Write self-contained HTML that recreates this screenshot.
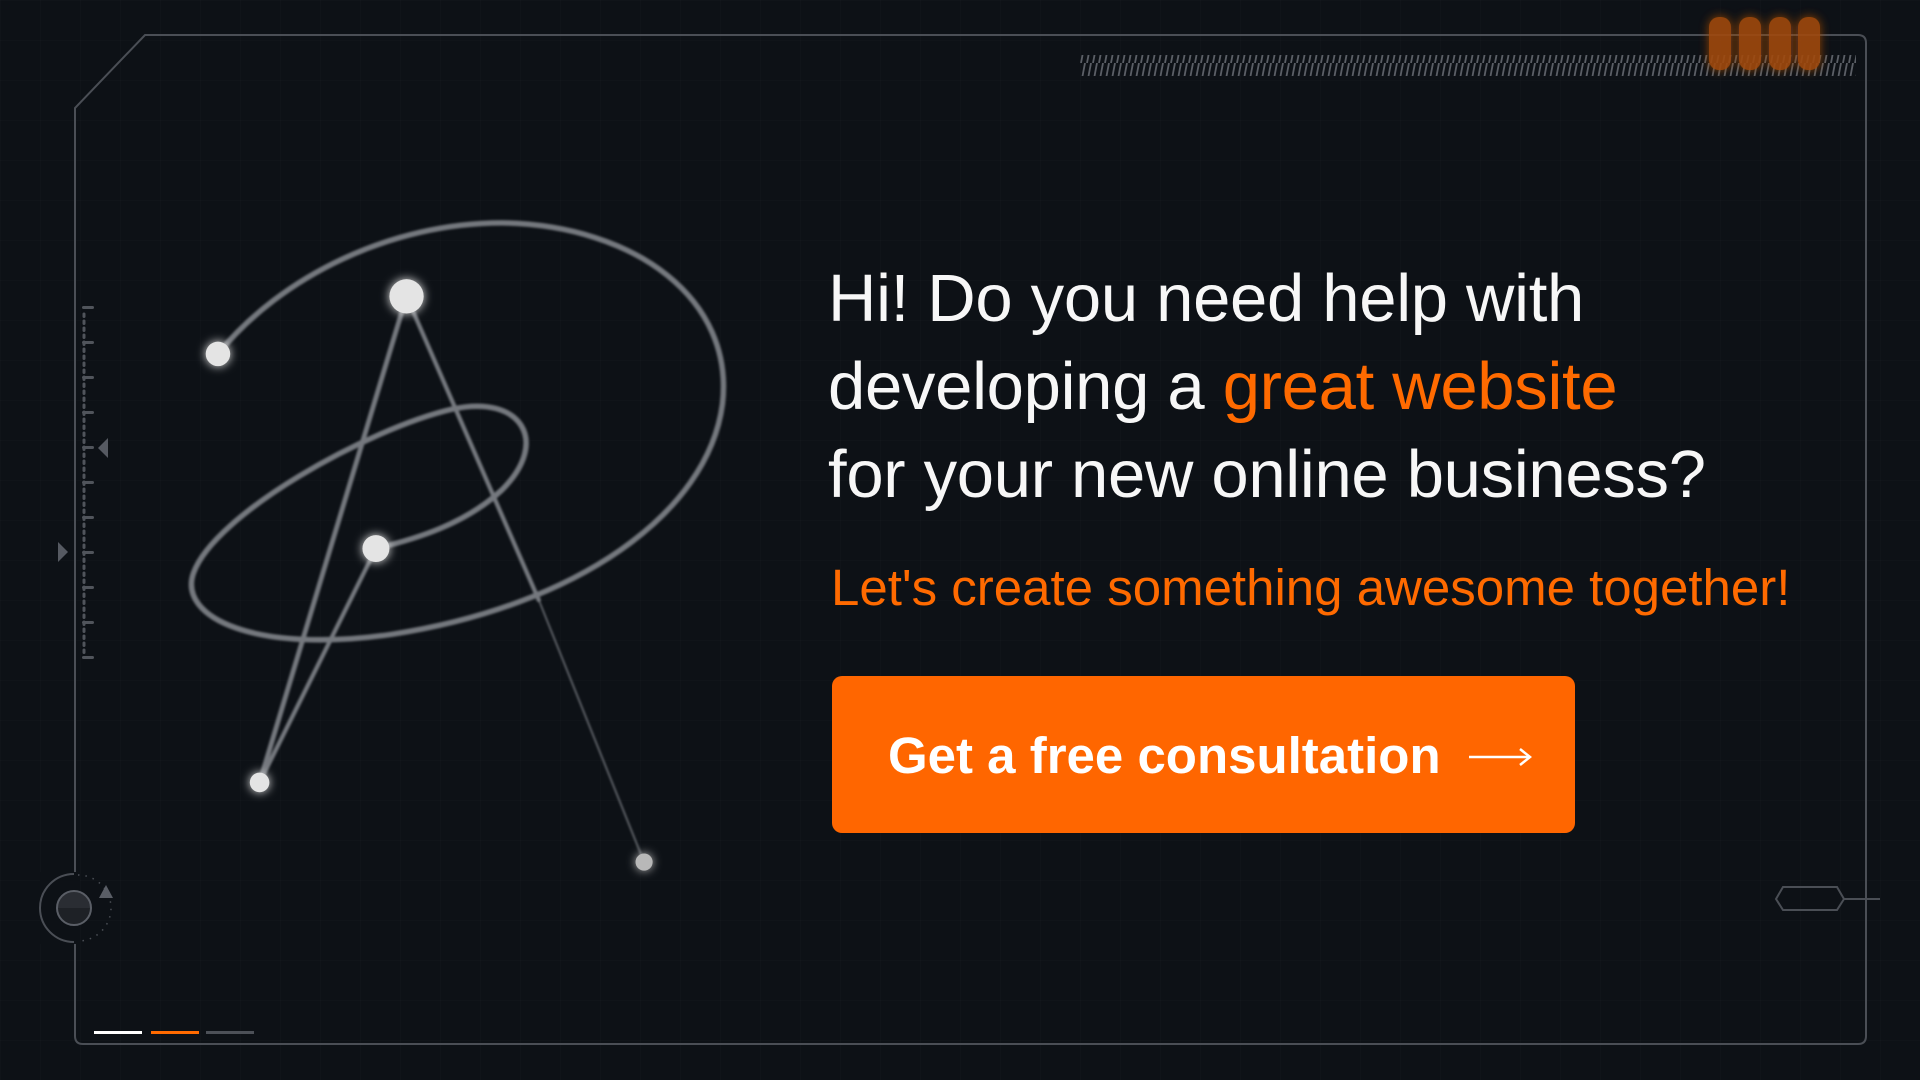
<!DOCTYPE html>
<html><head><meta charset="utf-8"><style>
html,body{margin:0;padding:0;}
body{width:1920px;height:1080px;overflow:hidden;background:#0d1116;position:relative;font-family:"Liberation Sans",sans-serif;
background-image:linear-gradient(rgba(255,255,255,0.012) 1px,transparent 1px),linear-gradient(90deg,rgba(255,255,255,0.012) 1px,transparent 1px);background-size:40px 40px;}
.t{position:absolute;white-space:nowrap;}
.h{left:828px;font-size:67px;color:#f7f7f7;letter-spacing:-0.3px;line-height:1;}
.o{color:#ff6a00;}
</style></head><body>
<svg width="1920" height="1080" style="position:absolute;left:0;top:0" xmlns="http://www.w3.org/2000/svg">
<defs>
<pattern id="hatch" width="6" height="21" patternUnits="userSpaceOnUse">
<line x1="5" y1="0" x2="1" y2="21" stroke="#5b5f66" stroke-width="1.8"/>
</pattern>
<filter id="glow" x="-100%" y="-100%" width="300%" height="300%"><feGaussianBlur stdDeviation="4" result="b"/><feMerge><feMergeNode in="b"/><feMergeNode in="SourceGraphic"/></feMerge></filter>
<filter id="og" x="-100%" y="-50%" width="300%" height="200%"><feGaussianBlur stdDeviation="5" result="b"/><feMerge><feMergeNode in="b"/><feMergeNode in="SourceGraphic"/></feMerge></filter>
<filter id="soft"><feGaussianBlur stdDeviation="0.8"/></filter>
</defs>
<path d="M145 35 H1858 Q1866 35 1866 43 V1036 Q1866 1044 1858 1044 H83 Q75 1044 75 1036 V108 Z" fill="none" stroke="#4a4e55" stroke-width="2"/>
<rect x="1080" y="55" width="776" height="21" fill="url(#hatch)"/>
<g fill="#a04a08" opacity="0.9" filter="url(#og)">
<rect x="1709" y="17" width="22" height="53" rx="10"/>
<rect x="1739" y="17" width="22" height="53" rx="10"/>
<rect x="1769" y="17" width="22" height="53" rx="10"/>
<rect x="1798" y="17" width="22" height="53" rx="10"/>
</g>
<g fill="#50545b">
<rect x="82" y="306" width="12" height="3" rx="1.5"/><rect x="82" y="341" width="12" height="3" rx="1.5"/><rect x="82" y="376" width="12" height="3" rx="1.5"/><rect x="82" y="411" width="12" height="3" rx="1.5"/><rect x="82" y="446" width="12" height="3" rx="1.5"/><rect x="82" y="481" width="12" height="3" rx="1.5"/><rect x="82" y="516" width="12" height="3" rx="1.5"/><rect x="82" y="551" width="12" height="3" rx="1.5"/><rect x="82" y="586" width="12" height="3" rx="1.5"/><rect x="82" y="621" width="12" height="3" rx="1.5"/><rect x="82" y="656" width="12" height="3" rx="1.5"/>
</g>
<line x1="84" y1="314" x2="84" y2="654" stroke="#50545b" stroke-width="3" stroke-dasharray="2.5 4.5" stroke-linecap="round"/>
<polygon points="98,448 108,438 108,458" fill="#565a62"/>
<polygon points="68,552 58,542 58,562" fill="#565a62"/>
<rect x="40" y="872" width="40" height="72" fill="#0d1116"/>
<path d="M74 874 A34 34 0 0 0 74 942" fill="none" stroke="#4a4e55" stroke-width="2"/>
<path d="M78 875 A33 33 0 0 1 78 941" fill="none" stroke="#4a4e55" stroke-width="1.5" stroke-dasharray="1.5 6"/>
<circle cx="74" cy="908" r="17" fill="#1e2126"/>
<path d="M57 908 A17 17 0 0 1 91 908 Z" fill="#2a2d33"/>
<circle cx="74" cy="908" r="17" fill="none" stroke="#5a5e66" stroke-width="2"/>
<polygon points="106,885 113,898 99,898" fill="#5a5e66"/>
<polygon points="1776,899 1783,887 1837,887 1844,899 1837,910 1783,910" fill="none" stroke="#4a4e55" stroke-width="2"/>
<line x1="1844" y1="899" x2="1880" y2="899" stroke="#4a4e55" stroke-width="2"/>
<rect x="94" y="1031" width="48" height="3" fill="#ffffff"/>
<rect x="151" y="1031" width="48" height="3" fill="#ff6a00"/>
<rect x="206" y="1031" width="48" height="3" fill="#4c5057"/>
<g transform="scale(1.2245)">
<g fill="none" stroke="#74787e" stroke-linecap="round" filter="url(#soft)">
<path d="M178 289 C230 225 320 182 410 182 C520 184 600 245 590 330 C578 420 470 495 320 518 C210 534 145 505 158 468 C175 420 300 350 370 334 C425 322 450 360 410 400 C380 428 340 440 307 448" stroke-width="4.5"/>
<line x1="332" y1="242" x2="212" y2="639" stroke-width="4"/>
<line x1="332" y1="242" x2="440" y2="490" stroke-width="3.5"/>
<line x1="440" y1="490" x2="526" y2="704" stroke-width="1.2"/>
<line x1="307" y1="448" x2="212" y2="639" stroke-width="3.5"/>
</g>
<g fill="#e4e4e4" filter="url(#glow)">
<circle cx="178" cy="289" r="10"/>
<circle cx="332" cy="242" r="14"/>
<circle cx="307" cy="448" r="11"/>
<circle cx="212" cy="639" r="8"/>
<circle cx="526" cy="704" r="7" fill="#b8b8b8"/>
</g>
</g>
<rect x="832" y="676" width="743" height="157" rx="10" fill="#ff6600"/>
<line x1="1469" y1="757" x2="1529" y2="757" stroke="#fff" stroke-width="2.5"/>
<path d="M1520 749 L1530 757 L1520 765" fill="none" stroke="#fff" stroke-width="2.5"/>
</svg>
<div class="t h" style="top:265px">Hi! Do you need help with</div>
<div class="t h" style="top:353px">developing a <span class="o">great website</span></div>
<div class="t h" style="top:441px">for your new online business?</div>
<div class="t" style="left:831px;top:562px;font-size:51px;color:#ff6a00;line-height:1;">Let's create something awesome together!</div>
<div class="t" style="left:888px;top:730px;font-size:51px;font-weight:bold;color:#fff;line-height:1;">Get a free consultation</div>
</body></html>
